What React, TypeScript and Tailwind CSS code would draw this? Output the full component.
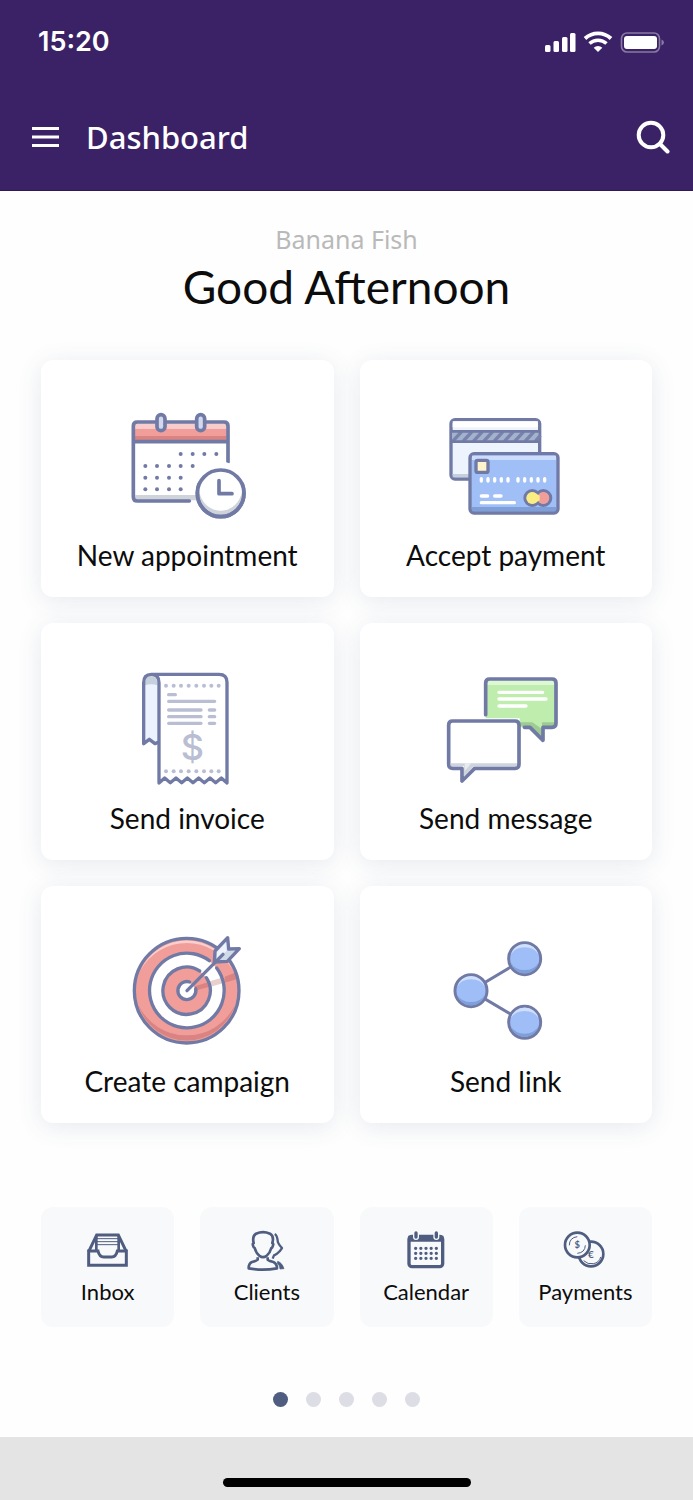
import { useState } from 'react';
import type { ReactNode } from 'react';

const LINE = '#717aa5';
const NAVY = '#4f5d80';

const ACTIONS: { label: string; icon: ReactNode }[] = [
  { label: 'New appointment', icon: <AppointmentIcon /> },
  { label: 'Accept payment', icon: <CardsIcon /> },
  { label: 'Send invoice', icon: <InvoiceIcon /> },
  { label: 'Send message', icon: <MessageIcon /> },
  { label: 'Create campaign', icon: <TargetIcon /> },
  { label: 'Send link', icon: <ShareIcon /> },
];

const SHORTCUTS: { label: string; icon: ReactNode }[] = [
  { label: 'Inbox', icon: <InboxIcon /> },
  { label: 'Clients', icon: <ClientsIcon /> },
  { label: 'Calendar', icon: <CalendarIcon /> },
  { label: 'Payments', icon: <CoinsIcon /> },
];

const PAGES = [1, 2, 3, 4, 5];

export default function App() {
  const [page, setPage] = useState(1);

  return (
    <div className="flex min-h-screen flex-col bg-[#fefefe] font-[Lato,sans-serif] text-[#0c0c0c]">
      <header className="border-b border-[#2f1a56] bg-[#3b2166] text-white">
        <StatusBar />
        <div className="flex h-[106px] items-center pr-[23px] pl-8">
          <button type="button" aria-label="Open menu">
            <svg width="27" height="22" viewBox="0 0 27 22" fill="#fff">
              <path d="M0 1h27v3H0zM0 9.500h27v3H0zM0 18h27v3H0z" />
            </svg>
          </button>
          <h1 className="ml-[27px] font-['Noto_Sans',sans-serif] text-[31px] leading-10 font-medium">
            Dashboard
          </h1>
          <button type="button" aria-label="Search" className="ml-auto">
            <svg width="34" height="34" viewBox="0 0 34 34" fill="none" stroke="#fff" strokeWidth="4">
              <circle cx="15" cy="15" r="12.300" />
              <path d="m24 24 7.500 7.500" strokeLinecap="round" />
            </svg>
          </button>
        </div>
      </header>

      <main className="flex flex-1 flex-col px-[41px] pt-8">
        <p className="text-center font-['Noto_Sans',sans-serif] text-[25px] leading-8 text-[#b9b9b9]">
          Banana Fish
        </p>
        <h2 className="text-center text-[46px] leading-[64px]">Good Afternoon</h2>

        <div className="mt-[41px] grid grid-cols-2 gap-[26px]">
          {ACTIONS.map((a) => (
            <button
              key={a.label}
              type="button"
              className="flex h-[237px] flex-col items-center rounded-xl bg-white pt-[45px] text-[28px] leading-9 shadow-[0_4px_24px_rgba(60,80,120,0.12)]"
            >
              {a.icon}
              <span className="mt-3">{a.label}</span>
            </button>
          ))}
        </div>

        <nav className="mt-[84px] grid grid-cols-4 gap-[26px]">
          {SHORTCUTS.map((s) => (
            <a
              key={s.label}
              href="#"
              className="flex h-[120px] flex-col items-center rounded-xl bg-[#f8f9fb] pt-[19px] text-[22px] leading-7"
            >
              {s.icon}
              <span className="mt-1">{s.label}</span>
            </a>
          ))}
        </nav>

        <div className="mt-[65px] mb-[30px] flex justify-center gap-[18px]">
          {PAGES.map((n) => (
            <button
              key={n}
              type="button"
              aria-label={`Page ${n}`}
              onClick={() => setPage(n)}
              className={n === page ? 'size-[15px] rounded-full bg-[#4f5d80]' : 'size-[15px] rounded-full bg-[#dcdde5]'}
            />
          ))}
        </div>
      </main>

      <footer className="flex h-[63px] items-end justify-center bg-[#e4e4e4] pb-[13px]">
        <div className="h-[9px] w-[248px] rounded-full bg-black" />
      </footer>
    </div>
  );
}

function StatusBar() {
  return (
    <div className="flex h-[84px] items-center justify-between pr-[29px] pl-[38px]">
      <span className="font-[Inter,sans-serif] text-[27px] leading-8 font-semibold">15:20</span>
      <svg width="120" height="22" viewBox="0 0 120 22" fill="#fff">
        {/* signal */}
        <rect x="1" y="14" width="5.5" height="7" rx="1.5" />
        <rect x="9.5" y="10" width="5.5" height="11" rx="1.5" />
        <rect x="18" y="6" width="5.5" height="15" rx="1.5" />
        <rect x="26" y="2" width="5.5" height="19" rx="1.5" />
        {/* wifi */}
        <path d="M41 7.5a19 19 0 0 1 26 0" fill="none" stroke="#fff" strokeWidth="3.8" />
        <path d="M45.5 12.5a12.5 12.5 0 0 1 17 0" fill="none" stroke="#fff" strokeWidth="3.5" />
        <path d="M54 21l-4.3-4.2a6.3 6.3 0 0 1 8.6 0z" />
        {/* battery */}
        <rect x="77.5" y="2" width="38" height="19" rx="5.5" fill="none" stroke="#fff" strokeOpacity=".4" strokeWidth="1.6" />
        <rect x="80" y="5" width="33" height="13" rx="3" />
        <path d="M117.5 8.5q2.5 1 2.5 3t-2.5 3z" opacity=".4" />
      </svg>
    </div>
  );
}

function AppointmentIcon() {
  const dots = [
    [182, 162], [218, 162], [253, 162], [289, 162],
    [76, 198], [111, 198], [147, 198], [182, 198], [218, 198],
    [76, 233], [111, 233], [147, 233], [182, 233],
    [76, 268], [111, 268], [147, 268], [182, 268],
  ];
  return (
    <svg width="120" height="120" viewBox="21 15 360 360" fill="none" stroke={LINE} strokeWidth="11" strokeLinecap="round">
      <path d="M44 70h276v16H44z" fill="#f7cccb" stroke="none" />
      <path d="M44 86h276v24H44z" fill="#f19e9b" stroke="none" />
      <path d="M44 108h276v12H44z" fill="#d98482" stroke="none" />
      <path d="M46 285h182v16H46z" fill="#cfd3da" stroke="none" />
      <path d="M324 187V78q0-12-12-12H52q-12 0-12 12v212q0 13 12 13h156M42 125h280" />
      <rect x="111" y="44" width="24" height="48" rx="12" fill="#d2d9ef" />
      <rect x="230" y="44" width="24" height="48" rx="12" fill="#d2d9ef" />
      {dots.map(([x, y]) => (
        <circle key={`${x}-${y}`} cx={x} cy={y} r="6" fill={LINE} stroke="none" />
      ))}
      <circle cx="302" cy="280" r="70" fill="#cfd3da" />
      <path d="M237 262a66 66 0 1 1 130 0c0 40-29 70-65 70s-65-30-65-70z" fill="#fff" stroke="none" />
      <circle cx="302" cy="280" r="70" />
      <path d="M297 242v39h39" strokeLinejoin="round" />
    </svg>
  );
}

function CardsIcon() {
  return (
    <svg width="120" height="120" viewBox="32 15 360 360" fill="none" stroke={LINE} strokeWidth="10">
      <rect x="47" y="59" width="266" height="178" rx="12" fill="#eef4fe" />
      <path d="M52 64h256v18H52z" fill="#fff" stroke="none" />
      <path d="M52 222h60v10H52z" fill="#c5cfdb" stroke="none" />
      <path d="M50 95h260v29H50z" fill="#a2b3cc" stroke="none" />
      <path
        d="m52 124 27-29m4 29 27-29m4 29 27-29m4 29 27-29m4 29 27-29m4 29 27-29m4 29 27-29m4 29 27-29m4 29 15-18"
        stroke="#7b81ad"
        strokeWidth="10"
      />
      <path d="M47 94h266M47 125h266" strokeWidth="8" />
      <rect x="104" y="161" width="264" height="178" rx="12" fill="#a0bff7" />
      <path d="M110 167h252v13H110z" fill="#cbdcfc" stroke="none" />
      <path d="M110 321h252v13H110z" fill="#7e9fd8" stroke="none" />
      <rect x="122" y="181" width="36" height="36" rx="5" fill="#fdf4cb" />
      <g stroke="#fff" strokeLinecap="round">
        <path d="M138 236v7m20-7v7m20-7v7m20-7v7m20-7v7m30-7v7m20-7v7m20-7v7m20-7v7m20-7v7" />
        <path d="M138 288h19m21 0h19m-59 20h99" />
      </g>
      <circle cx="324" cy="294" r="22" />
      <circle cx="291" cy="294" r="22" />
      <circle cx="324" cy="294" r="18" fill="#f19e9b" stroke="none" />
      <circle cx="291" cy="294" r="18" fill="#faee82" stroke="none" />
      <path d="M303 281l10 6v14l-10 6z" fill="#faee82" stroke="none" />
    </svg>
  );
}

function InvoiceIcon() {
  const holes = [123, 146, 168, 191, 214, 237, 259, 281];
  return (
    <svg width="120" height="120" viewBox="6 24 360 360" fill="none" stroke={LINE} strokeWidth="10" strokeLinejoin="round">
      <path d="M56 250V68q0-24 22-24 24 0 24 24v180l-12 2-17-13z" fill="#edf3fe" stroke="none" />
      <path d="M60 76V66q3-17 18-17 20 0 20 27-19-7-38 0z" fill="#c6d0dd" stroke="none" />
      <path
        d="M102 245l-12 6-17-13-17 13V68q0-25 23-25 23 0 23 25v301l17-15 17 14 17-14 17 14 17-14 17 14 17-14 17 14 17-14 17 14 17-14 17 15V67q0-24-24-24H79"
        strokeLinecap="round"
      />
      <g stroke="#b9bed3" strokeLinecap="round">
        <path d="M131 104h20m-20 20h138m-138 26h97m25 0h16m-138 20h97m25 0h16m-138 20h97m25 0h16" />
      </g>
      <g fill="#b9bed3" stroke="none">
        {holes.map((x) => (
          <circle key={x} cx={x} cy="77" r="6" />
        ))}
        {holes.map((x) => (
          <circle key={x} cx={x} cy="334" r="6" />
        ))}
        <text x="202" y="300" textAnchor="middle" fontSize="108" className="font-[Inter,sans-serif] font-medium">
          $
        </text>
      </g>
    </svg>
  );
}

function MessageIcon() {
  return (
    <svg width="120" height="120" viewBox="32 9 360 360" fill="none" stroke={LINE} strokeWidth="11" strokeLinecap="round" strokeLinejoin="round">
      <path d="M151 160V42h211v145h-39v38l-39-38h-31v-27z" fill="#beedae" stroke="none" />
      <path d="M156 46h202v14H156z" fill="#def7d5" stroke="none" />
      <path d="M255 172h36l29 20v-20h39v12h-36v38l-37-38h-31z" fill="#9dcb92" stroke="none" />
      <path d="M151 149V54q0-12 12-12h187q12 0 12 12v121q0 12-12 12h-27v39l-39-39h-17" />
      <path d="M191 82h131m-131 20h141m-141 21h81" stroke="#fff" strokeWidth="10" />
      <path d="M52 168h187q12 0 12 12v118q0 12-12 12H118l-38 38v-38H52q-12 0-12-12V180q0-12 12-12z" fill="#fff" />
      <path d="M46 295h199v9H116l-30 31v-31H46z" fill="#ced4dd" stroke="none" />
      <path d="m88 318 20-23h-20z" fill="#e8ecf1" stroke="none" />
    </svg>
  );
}

function TargetIcon() {
  return (
    <svg width="120" height="120" viewBox="21 18 360 360" fill="none" stroke={LINE} strokeWidth="10" strokeLinecap="round" strokeLinejoin="round">
      <circle cx="200" cy="197" r="157" fill="#f19e9b" stroke="none" />
      <path d="M62 135a152 152 0 0 1 276 0 158 158 0 0 0-276 0z" fill="#f8d0ce" stroke="none" />
      <path d="M55 240a152 152 0 0 0 290 0 161 161 0 0 1-290 0z" fill="#d98482" stroke="none" />
      <circle cx="200" cy="197" r="112" fill="#fff" stroke="none" />
      <circle cx="200" cy="197" r="70" fill="#f19e9b" stroke="none" />
      <path d="m224 184 45-14v15l-45 12z" fill="#d98482" stroke="none" />
      <path d="m269 169 42-12v17l-42 12z" fill="#e8d0cf" stroke="none" />
      <path d="m314 155 31-12 7 19-38 11z" fill="#d98482" stroke="none" />
      <circle cx="200" cy="197" r="157" />
      <path d="M268 107A112 112 0 1 0 290 129M239 138A71 71 0 1 0 259 158" />
      <path d="M209 171a27 27 0 1 0 18 20" fill="#fff" />
      <path d="m285 78 38-40 3 34 32-1-36 38-39 2z" fill="#cfdbe8" />
      <path d="m291 81 27-29 2 25-29 28z" fill="#eef4fe" stroke="none" />
      <path d="M201 197 309 88" />
    </svg>
  );
}

function ShareIcon() {
  const nodes = [[253, 86], [92, 182], [253, 277]];
  return (
    <svg width="120" height="120" viewBox="17 3 360 360" fill="none" stroke={LINE} strokeWidth="9">
      <path d="M253 86 92 182l161 95" />
      {nodes.map(([x, y]) => (
        <g key={`${x}-${y}`} transform={`translate(${x} ${y})`}>
          <circle r="48" fill="#9fbef7" />
          <path d="M-42-12a43.500 43.500 0 0 1 84 0 47 40 0 0 0-84 0z" fill="#cfdffc" stroke="none" />
          <path d="M-42 12a43.500 43.500 0 0 0 84 0 47 40 0 0 1-84 0z" fill="#7f9fd9" stroke="none" />
        </g>
      ))}
    </svg>
  );
}

function InboxIcon() {
  return (
    <svg width="48" height="48" viewBox="162 93 144 144" fill="none" stroke={NAVY} strokeWidth="9">
      <path d="M176 168h28q4 18 17 18h24q13 0 17-18h27v43H176z" />
      <path d="m176 170 24-50h65l24 50" />
      <path d="M199 120v45M266 120v45" strokeWidth="8" />
      <path d="M200 131h66m-66 9h66m-66 9h66" strokeWidth="3" />
    </svg>
  );
}

function ClientsIcon() {
  return (
    <svg width="48" height="48" viewBox="639 93 144 144" fill="none" stroke={NAVY} strokeWidth="8" strokeLinejoin="round">
      <path d="M683 187v7q-5 5-17 7-10 4-10 19 42 8 85 0 0-14-11-19-12-3-17-7v-7" />
      <path d="M671 144q-5-20 7-28 21-9 42 0 13 8 7 28 4 1 2 7-2 8-5 8-4 15-14 23-11 9-22 0-10-8-14-23-4-1-5-8-2-6 2-7z" />
      <path d="M734 117q7 3 9 20 0 8 13 22l-7 10q-7 8-17 12l-4 10" strokeWidth="7" />
      <path d="M743 199q13 4 19 22l-12 1q0-10-8-17z" fill={NAVY} strokeWidth="2" />
    </svg>
  );
}

function CalendarIcon() {
  return (
    <svg width="48" height="48" viewBox="156 93 144 144" fill="none" stroke={NAVY} strokeWidth="10">
      <rect x="177" y="124" width="101" height="91" rx="9" />
      <path d="M177 124h101v14H177z" fill={NAVY} strokeWidth="4" />
      <g strokeLinecap="round">
        <path d="M198 114v12m61-12v12" stroke="#f8f9fb" strokeWidth="18" />
        <path d="M198 114v12m61-12v12" />
        <path
          d="M197 160h0m15.5 0h0m15.5 0h0m15.5 0h0m15.5 0h0M197 175h0m15.5 0h0m15.5 0h0m15.5 0h0m15.5 0h0M197 190h0m15.5 0h0m15.5 0h0m15.5 0h0m15.5 0h0"
        />
      </g>
    </svg>
  );
}

function CoinsIcon() {
  return (
    <svg width="48" height="48" viewBox="634 93 144 144" fill="none" stroke={NAVY} strokeWidth="8">
      <circle cx="724" cy="177" r="37" />
      <path d="M702 197q12 12 29 9 18-3 22-20" strokeWidth="3" />
      <text x="724" y="189" textAnchor="middle" fontSize="30" fill={NAVY} stroke="none" className="font-[Lato,sans-serif] font-bold">
        €
      </text>
      <circle cx="683" cy="150" r="37" fill="#f8f9fb" />
      <path d="M659 151q0-23 24-26M707 151q-1 22-24 24" strokeWidth="3" />
      <text x="683" y="160" textAnchor="middle" fontSize="28" fill={NAVY} stroke="none" className="font-[Lato,sans-serif] font-bold">
        $
      </text>
    </svg>
  );
}
